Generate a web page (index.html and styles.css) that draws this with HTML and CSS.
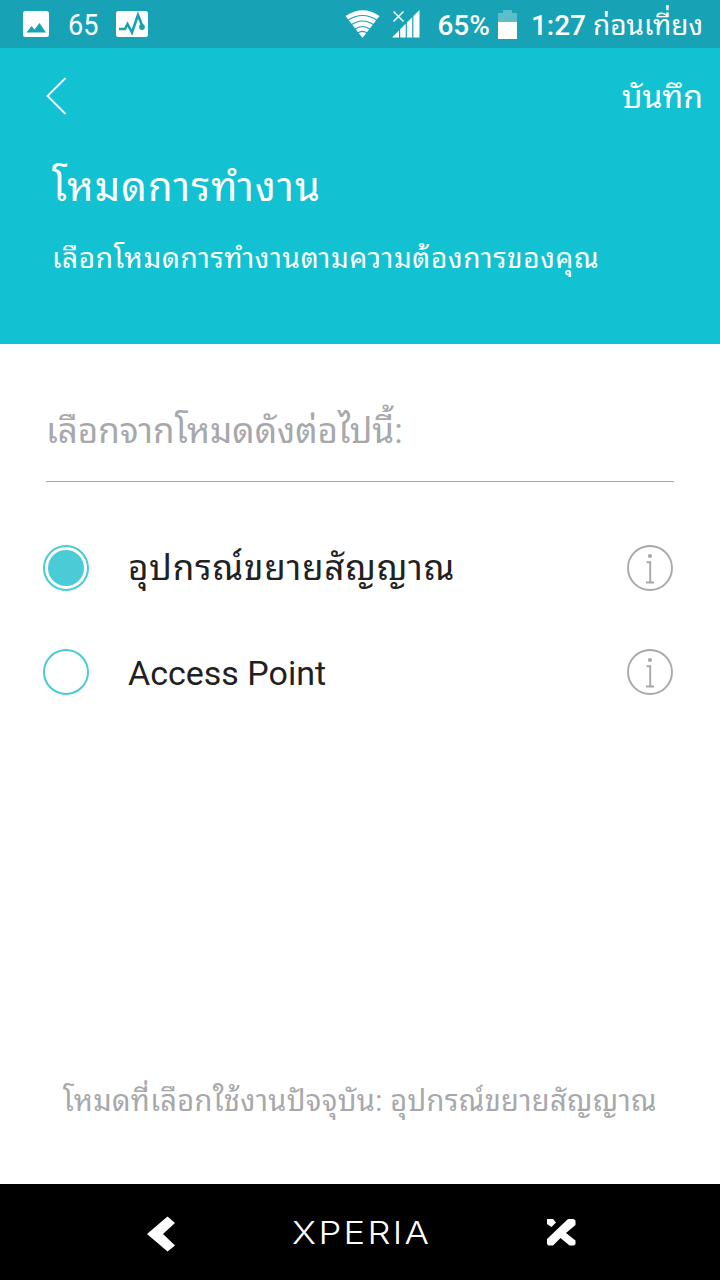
FILE: index.html
```html
<!DOCTYPE html>
<html lang="th">
<head>
    <meta charset="UTF-8">
    <meta name="viewport" content="width=device-width, initial-scale=1.0">
    <title>โหมดการทำงาน</title>
    <link rel="stylesheet" href="styles.css">
</head>
<body>

<div class="status-bar">
    <svg class="icon-picture" width="26" height="26" viewBox="0 0 26 26">
        <rect width="26" height="26" rx="2.5" fill="#fff"/>
        <path d="M3.5 21.5L8.5 15l3 3.5L16.5 12l6.500 9.500z" fill="#17a2b5"/>
    </svg>
    <span class="status-count">65</span>
    <svg class="icon-pulse" width="32" height="26" viewBox="0 0 32 26">
        <rect width="32" height="26" rx="2.5" fill="#fff"/>
        <path d="M3 18h6l2.500-5 4.500 8.500L22 4l4.500 11.500" fill="none" stroke="#17a2b5" stroke-width="2.600"/>
        <circle cx="26" cy="16" r="2.900" fill="#17a2b5"/>
    </svg>
    <div class="status-right">
        <svg class="icon-wifi" width="36" height="30" viewBox="0 0 36 30">
            <path d="M.5 7Q18-4.500 34.500 7L17.500 29z" fill="#fff"/>
            <path d="M2.500 11.500Q17.500 1.500 32.500 11.500M6 16Q17.500 8 29 16M9.500 20.500Q17.500 14.500 25.500 20.500M12.500 24.200Q17.500 20.500 22.500 24.200" fill="none" stroke="#17a2b5" stroke-width="1.100"/>
        </svg>
        <svg class="icon-signal" width="28" height="28" viewBox="0 0 28 28">
            <path d="M0 27.500L7 20.500v7zM8.200 27.500V19.300l5.500-5.500v13.700zM14.900 27.500V12.600l5.300-5.300v20.200zM21.400 27.500V6.100L27.500 0v27.500z" fill="#fff"/>
            <path d="M1.500 1.500l10 10M11.500 1.500l-10 10" stroke="#fff" stroke-width="1.500"/>
        </svg>
        <span class="battery-level">65%</span>
        <svg class="icon-battery" width="19" height="29" viewBox="0 0 19 29">
            <path d="M0 3h5V0h9v3h5v9H0z" fill="#5dbecb"/>
            <path d="M0 12h19v17H0z" fill="#fff"/>
        </svg>
        <span class="clock">1:27</span>
        <span class="clock-period">ก่อนเที่ยง</span>
    </div>
</div>

<div class="header">
    <div class="toolbar">
        <svg class="icon-back" width="22" height="38" viewBox="0 0 22 38">
            <path d="M20.500 1L2.500 19l18 18" fill="none" stroke="#fff" stroke-width="1.800"/>
        </svg>
        <span class="save">บันทึก</span>
    </div>
    <h1>โหมดการทำงาน</h1>
    <p class="subtitle">เลือกโหมดการทำงานตามความต้องการของคุณ</p>
</div>

<div class="content">
    <h2>เลือกจากโหมดดังต่อไปนี้:</h2>

    <div class="option">
        <span class="radio checked"></span>
        <span class="option-name thai">อุปกรณ์ขยายสัญญาณ</span>
        <svg class="icon-info" width="46" height="46" viewBox="0 0 46 46">
            <circle cx="23" cy="23" r="22" fill="none" stroke="#a7a8ab" stroke-width="1.900"/>
            <circle cx="23" cy="11" r="2.100" fill="#a7a8ab"/>
            <path d="M19.500 17.200H23.200V37.500M19 37.500h8" fill="none" stroke="#a7a8ab" stroke-width="1.900"/>
        </svg>
    </div>

    <div class="option">
        <span class="radio"></span>
        <span class="option-name">Access Point</span>
        <svg class="icon-info" width="46" height="46" viewBox="0 0 46 46">
            <circle cx="23" cy="23" r="22" fill="none" stroke="#a7a8ab" stroke-width="1.900"/>
            <circle cx="23" cy="11" r="2.100" fill="#a7a8ab"/>
            <path d="M19.500 17.200H23.200V37.500M19 37.500h8" fill="none" stroke="#a7a8ab" stroke-width="1.900"/>
        </svg>
    </div>

    <p class="current-mode">โหมดที่เลือกใช้งานปัจจุบัน: <span>อุปกรณ์ขยายสัญญาณ</span></p>
</div>

<div class="nav-bar">
    <svg class="nav-back" width="28" height="36" viewBox="0 0 28 36">
        <path d="M20.500 0.500L28 7 16 18l12 11.500-7.500 6L0 18z" fill="#fff"/>
    </svg>
    <span class="nav-brand">XPERIA</span>
    <svg class="nav-close" width="30" height="28" viewBox="0 0 30 28">
        <path d="M22 1h5.500L29.500 2.500V7L20 15 29.500 22.500V26l-1.500 1.500H23.500L14.500 20 7 27.500H2.500L1 26v-5z" fill="#fff"/>
        <path d="M1 1h6l3 3.500L5.500 9 1 6z" fill="#fff"/>
    </svg>
</div>

</body>
</html>
```
FILE: styles.css
```css
* {
    box-sizing: border-box;
    margin: 0;
    padding: 0;
}
body {
    width: 720px;
    height: 1280px;
    display: flex;
    flex-direction: column;
    font-family: Roboto, "Noto Sans Thai Looped", "Noto Looped Thai", "Droid Sans Thai", "Noto Sans Thai UI", Waree, Loma, Garuda, Umpush, "DejaVu Sans Thai", Tahoma, sans-serif;
    background-color: #fff;
    color: #212121;
    white-space: nowrap;
    overflow: hidden;
}
svg {
    display: block;
    flex: none;
}
h1, h2 {
    font-weight: 400;
}
.status-bar {
    height: 48px;
    padding: 0 17px 0 23px;
    display: flex;
    align-items: center;
    background-color: #17a2b5;
    color: #fff;
    font-size: 28px;
    line-height: 48px;
}
.status-count, .battery-level, .clock, .clock-period {
    padding-top: 3px;
}
.status-count {
    width: 31px;
    margin: 0 17px 0 19px;
    padding-top: 1px;
    font-size: 30px;
    transform: scaleX(0.9);
    transform-origin: left;
}
.status-right {
    margin-left: auto;
    display: flex;
    align-items: center;
}
.icon-signal {
    margin-left: 11px;
}
.battery-level, .clock {
    font-weight: 500;
}
.battery-level {
    margin: 0 8px 0 17px;
}
.clock {
    margin: 0 7px 0 14px;
}
.header {
    height: 296px;
    background-color: #12c2d2;
    color: #fff;
}
.toolbar {
    height: 96px;
    padding: 0 17px 0 45px;
    display: flex;
    align-items: center;
    justify-content: space-between;
}
.save {
    font-size: 32px;
    line-height: 96px;
    padding-top: 1px;
}
h1 {
    padding: 1px 0 0 52px;
    font-size: 40px;
    line-height: 86px;
    letter-spacing: 1.15px;
}
.subtitle {
    padding-left: 52px;
    font-size: 28px;
    line-height: 56px;
    letter-spacing: 0.67px;
}
.content {
    flex: 1;
    padding: 34px 46px 0;
    display: flex;
    flex-direction: column;
}
h2 {
    height: 104px;
    margin-bottom: 34px;
    border-bottom: 1px solid #a7a8ab;
    font-size: 35px;
    line-height: 107px;
    color: #a7a8ab;
}
.option {
    height: 104px;
    margin: 0 1px 0 -3px;
    display: flex;
    align-items: center;
}
.radio {
    width: 46px;
    height: 46px;
    border: 2px solid #4acbd6;
    border-radius: 50%;
}
.radio.checked {
    padding: 3px;
    background: #4acbd6 content-box;
}
.option-name {
    padding-top: 2px;
    margin-left: 39px;
    font-size: 34px;
    line-height: 104px;
}
.option-name.thai {
    font-size: 35px;
    letter-spacing: 0.8px;
}
.icon-info {
    margin-left: auto;
}
.current-mode {
    margin-top: auto;
    margin-bottom: 53px;
    font-size: 29px;
    line-height: 60px;
    letter-spacing: 0.35px;
    text-align: center;
    color: #a7a8ab;
}
.nav-bar {
    height: 96px;
    padding: 0 144px 0 147px;
    display: flex;
    align-items: center;
    justify-content: space-between;
    background-color: #000;
    color: #fff;
}
.nav-back {
    margin-top: 4px;
}
.nav-brand {
    padding-left: 2px;
    font-family: Inter, sans-serif;
    font-weight: 300;
    font-size: 31px;
    letter-spacing: 2px;
    transform: scaleX(1.17);
}
```
